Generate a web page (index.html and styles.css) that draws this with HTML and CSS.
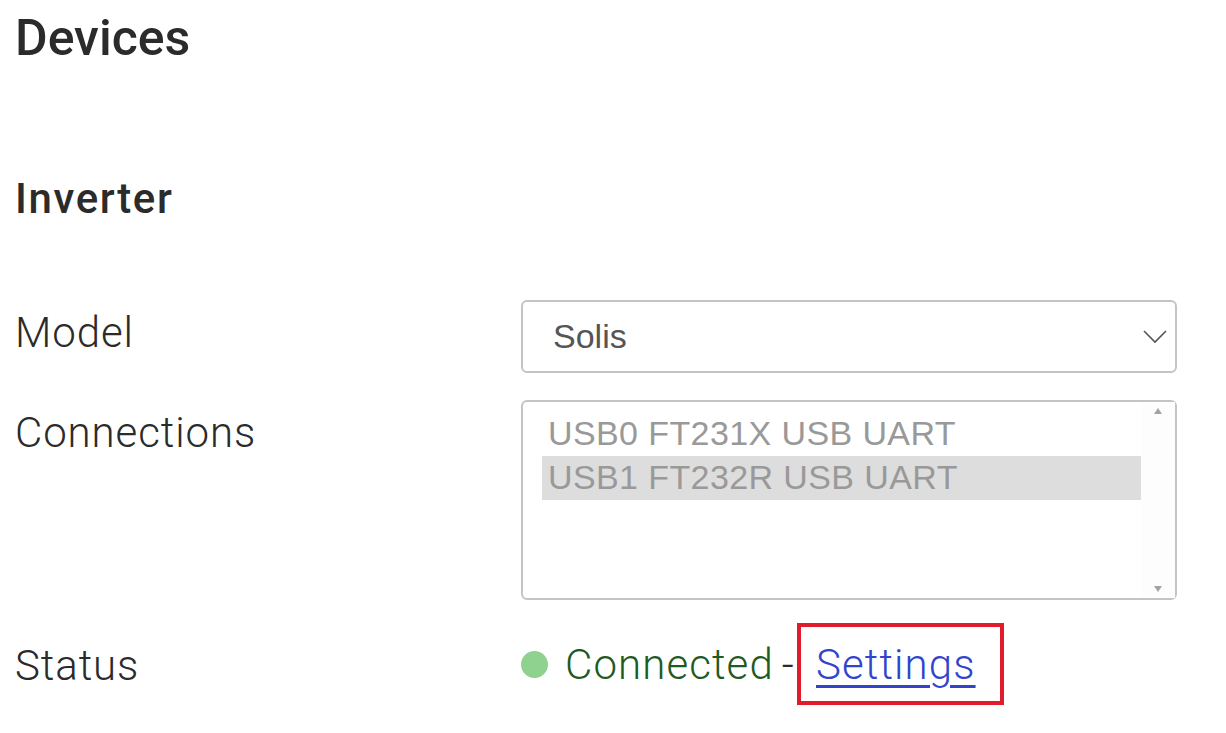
FILE: index.html
```html
<!DOCTYPE html>
<html>
<head>
<meta charset="utf-8">
<link rel="stylesheet" href="styles.css">
</head>
<body>
<div class="page">
  <h1 class="title">Devices</h1>
  <h2 class="section">Inverter</h2>
  <div class="form">
    <div class="label">Model</div>
    <div class="select">
      <span class="select-text">Solis</span>
      <svg class="chevron" width="24" height="14" viewBox="0 0 24 14"><polyline points="1,1 12,12 23,1" fill="none" stroke="#555" stroke-width="1.6"/></svg>
    </div>
    <div class="label">Connections</div>
    <div class="listbox">
      <div class="options">
        <div class="option">USB0 FT231X USB UART</div>
        <div class="option selected">USB1 FT232R USB UART</div>
      </div>
      <div class="scrollbar">
        <svg width="10" height="8" viewBox="0 0 10 8"><polygon points="5,1 9,7 1,7" fill="#a3a3a3"/></svg>
        <svg width="10" height="8" viewBox="0 0 10 8"><polygon points="1,1 9,1 5,7" fill="#a3a3a3"/></svg>
      </div>
    </div>
    <div class="label status-label">Status</div>
    <div class="status">
      <span class="dot"></span>
      <span class="connected">Connected</span>
      <span class="dash">-</span>
      <span class="highlight"><a class="link" href="#">Settings</a></span>
    </div>
  </div>
</div>
</body>
</html>
```
FILE: styles.css
```css
html, body {
  margin: 0;
  padding: 0;
  background: #ffffff;
}
.page {
  padding: 0 49px 0 15px;
  font-family: Roboto, "Liberation Sans", sans-serif;
  color: #2b2b2b;
}
.title {
  margin: 0;
  padding-top: 8px;
  font-size: 50px;
  font-weight: 500;
  line-height: 60px;
}
.section {
  margin: 0;
  padding-top: 106px;
  font-size: 42px;
  font-weight: 500;
  line-height: 50px;
  letter-spacing: 1.6px;
}
.form {
  display: grid;
  grid-template-columns: 506px 656px;
  grid-template-rows: 73px 200px 82px;
  row-gap: 27px;
  margin-top: 76px;
}
.label {
  font-size: 42px;
  font-weight: 300;
  line-height: 50px;
  padding-top: 8px;
  letter-spacing: 0.9px;
  color: #2b2b2b;
}
.select {
  height: 73px;
  box-sizing: border-box;
  border: 2px solid #c4c4c4;
  border-radius: 6px;
  display: flex;
  align-items: center;
  justify-content: space-between;
  padding: 0 8px 0 30px;
  font-family: "Liberation Sans", Arial, sans-serif;
}
.select-text {
  font-size: 34px;
  color: #555555;
}
.listbox {
  height: 200px;
  box-sizing: border-box;
  border: 2px solid #c4c4c4;
  border-radius: 6px;
  display: flex;
  font-family: "Liberation Sans", Arial, sans-serif;
}
.options {
  flex: 1;
  padding: 10px 0 0 19px;
}
.option {
  height: 44px;
  line-height: 42px;
  font-size: 34px;
  letter-spacing: 0.4px;
  color: #999999;
  padding-left: 6px;
}
.option.selected {
  background: #dddddd;
}
.scrollbar {
  width: 34px;
  display: flex;
  flex-direction: column;
  justify-content: space-between;
  align-items: center;
  padding: 5px 0 5px 0;
  background: #fdfdfd;
}
.status-label {
  margin-top: -4px;
  padding-top: 0;
  align-self: center;
}
.status {
  display: flex;
  align-items: center;
  font-size: 42px;
  font-weight: 300;
  letter-spacing: 1.1px;
  height: 82px;
  margin-top: -4px;
}
.dot {
  width: 27px;
  height: 27px;
  border-radius: 50%;
  background: #8fd18f;
  margin-right: 17px;
}
.connected {
  color: #1f5a1f;
}
.dash {
  margin: 0 2px 0 8px;
  color: #2b2b2b;
}
.highlight {
  box-sizing: border-box;
  height: 82px;
  border: 4px solid #e01b2a;
  display: flex;
  align-items: center;
  padding: 0 24px 0 15px;
}
.link {
  color: #3344cc;
  text-decoration: underline;
  text-decoration-thickness: 3px;
  text-underline-offset: 6px;
}
```
